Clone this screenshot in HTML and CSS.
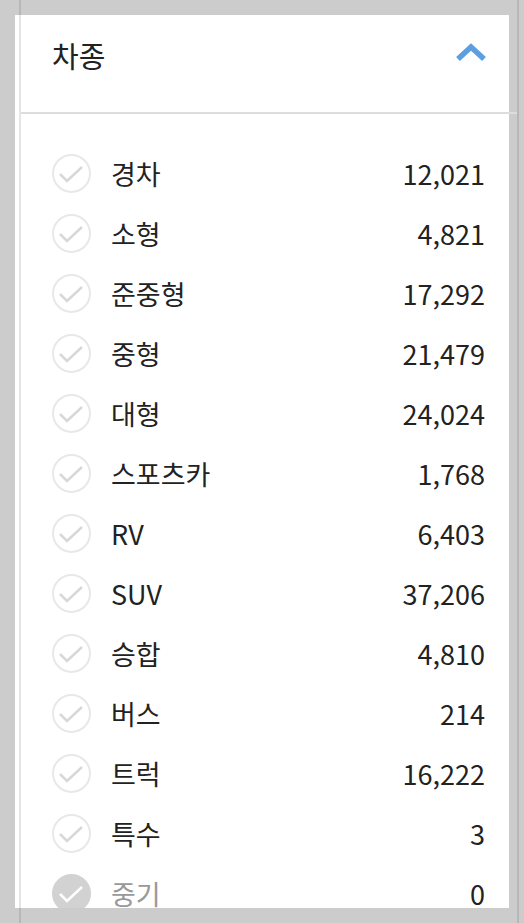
FILE: index.html
```html
<!DOCTYPE html>
<html lang="ko">
<head>
    <meta charset="UTF-8">
    <meta name="viewport" content="width=device-width, initial-scale=1.0">
    <title>차종</title>
    <link rel="stylesheet" href="styles.css">
</head>
<body>
    <div class="frame">
        <div class="panel">
            <div class="panel-header">
                <h2 class="panel-title">차종</h2>
                <svg class="toggle" width="32" height="20" viewBox="0 0 32 20">
                    <polyline points="3,16 16,4 29,16" fill="none" stroke="#5c9fe0" stroke-width="5.5"/>
                </svg>
            </div>
            <ul class="type-list">
                <li class="type-item"><svg class="check" viewBox="0 0 39 39"><circle cx="19.5" cy="19.5" r="18.5"/><polyline points="8,20 15,27 30,13"/></svg><span class="name">경차</span><span class="count">12,021</span></li>
                <li class="type-item"><svg class="check" viewBox="0 0 39 39"><circle cx="19.5" cy="19.5" r="18.5"/><polyline points="8,20 15,27 30,13"/></svg><span class="name">소형</span><span class="count">4,821</span></li>
                <li class="type-item"><svg class="check" viewBox="0 0 39 39"><circle cx="19.5" cy="19.5" r="18.5"/><polyline points="8,20 15,27 30,13"/></svg><span class="name">준중형</span><span class="count">17,292</span></li>
                <li class="type-item"><svg class="check" viewBox="0 0 39 39"><circle cx="19.5" cy="19.5" r="18.5"/><polyline points="8,20 15,27 30,13"/></svg><span class="name">중형</span><span class="count">21,479</span></li>
                <li class="type-item"><svg class="check" viewBox="0 0 39 39"><circle cx="19.5" cy="19.5" r="18.5"/><polyline points="8,20 15,27 30,13"/></svg><span class="name">대형</span><span class="count">24,024</span></li>
                <li class="type-item"><svg class="check" viewBox="0 0 39 39"><circle cx="19.5" cy="19.5" r="18.5"/><polyline points="8,20 15,27 30,13"/></svg><span class="name">스포츠카</span><span class="count">1,768</span></li>
                <li class="type-item"><svg class="check" viewBox="0 0 39 39"><circle cx="19.5" cy="19.5" r="18.5"/><polyline points="8,20 15,27 30,13"/></svg><span class="name">RV</span><span class="count">6,403</span></li>
                <li class="type-item"><svg class="check" viewBox="0 0 39 39"><circle cx="19.5" cy="19.5" r="18.5"/><polyline points="8,20 15,27 30,13"/></svg><span class="name">SUV</span><span class="count">37,206</span></li>
                <li class="type-item"><svg class="check" viewBox="0 0 39 39"><circle cx="19.5" cy="19.5" r="18.5"/><polyline points="8,20 15,27 30,13"/></svg><span class="name">승합</span><span class="count">4,810</span></li>
                <li class="type-item"><svg class="check" viewBox="0 0 39 39"><circle cx="19.5" cy="19.5" r="18.5"/><polyline points="8,20 15,27 30,13"/></svg><span class="name">버스</span><span class="count">214</span></li>
                <li class="type-item"><svg class="check" viewBox="0 0 39 39"><circle cx="19.5" cy="19.5" r="18.5"/><polyline points="8,20 15,27 30,13"/></svg><span class="name">트럭</span><span class="count">16,222</span></li>
                <li class="type-item"><svg class="check" viewBox="0 0 39 39"><circle cx="19.5" cy="19.5" r="18.5"/><polyline points="8,20 15,27 30,13"/></svg><span class="name">특수</span><span class="count">3</span></li>
                <li class="type-item disabled"><svg class="check" viewBox="0 0 39 39"><circle cx="19.5" cy="19.5" r="18.5"/><polyline points="8,20 15,27 30,13"/></svg><span class="name">중기</span><span class="count">0</span></li>
            </ul>
        </div>
    </div>
</body>
</html>
```

FILE: styles.css
```css
html, body {
    margin: 0;
    height: 100%;
    overflow: hidden;
}
body {
    font-family: "Noto Sans CJK KR", "Noto Sans", sans-serif;
    background-color: #cccccc;
    color: #222;
}
.frame {
    position: relative;
    margin-left: 19px;
    width: 500px;
    height: 923px;
    padding-top: 15px;
    box-sizing: border-box;
}
/* 좌우 세로선 (패널 위에 겹침) */
.frame::before,
.frame::after {
    content: "";
    position: absolute;
    top: 0;
    bottom: 0;
    width: 2px;
    background-color: rgba(0, 0, 0, 0.1);
    z-index: 1;
}
.frame::before {
    left: 0;
}
.frame::after {
    left: 498px;
}
.panel {
    margin-left: -4px;
    width: 494px;
    height: 893px;
    background-color: #fff;
    display: flex;
    flex-direction: column;
}
.panel-header {
    margin-left: 6px;
    width: 496px;
    height: 99px;
    box-sizing: border-box;
    border-bottom: 2px solid #dddddd;
    display: flex;
    justify-content: space-between;
    align-items: flex-start;
    padding: 20px 30px 0 31px;
    flex-shrink: 0;
}
.panel-title {
    margin: 0;
    font-size: 29px;
    font-weight: 400;
    line-height: 40px;
    color: #222;
}
.toggle {
    margin-top: 8px;
}
.type-list {
    list-style: none;
    margin: 0;
    padding: 29px 24px 0 37px;
    flex: 1;
    overflow: hidden;
}
.type-item {
    display: flex;
    align-items: center;
    height: 60px;
    font-size: 27px;
}
.check {
    width: 39px;
    height: 39px;
    flex-shrink: 0;
}
.check circle {
    fill: #fff;
    stroke: #e8e8e8;
    stroke-width: 2;
}
.check polyline {
    fill: none;
    stroke: #d8d8d8;
    stroke-width: 2.5;
}
.name {
    margin-left: 20px;
    flex: 1;
}
.count {
    text-align: right;
}
.disabled .check circle {
    fill: #d2d2d2;
    stroke: #d2d2d2;
}
.disabled .check polyline {
    stroke: #fff;
}
.disabled .name {
    color: #999;
}
```
